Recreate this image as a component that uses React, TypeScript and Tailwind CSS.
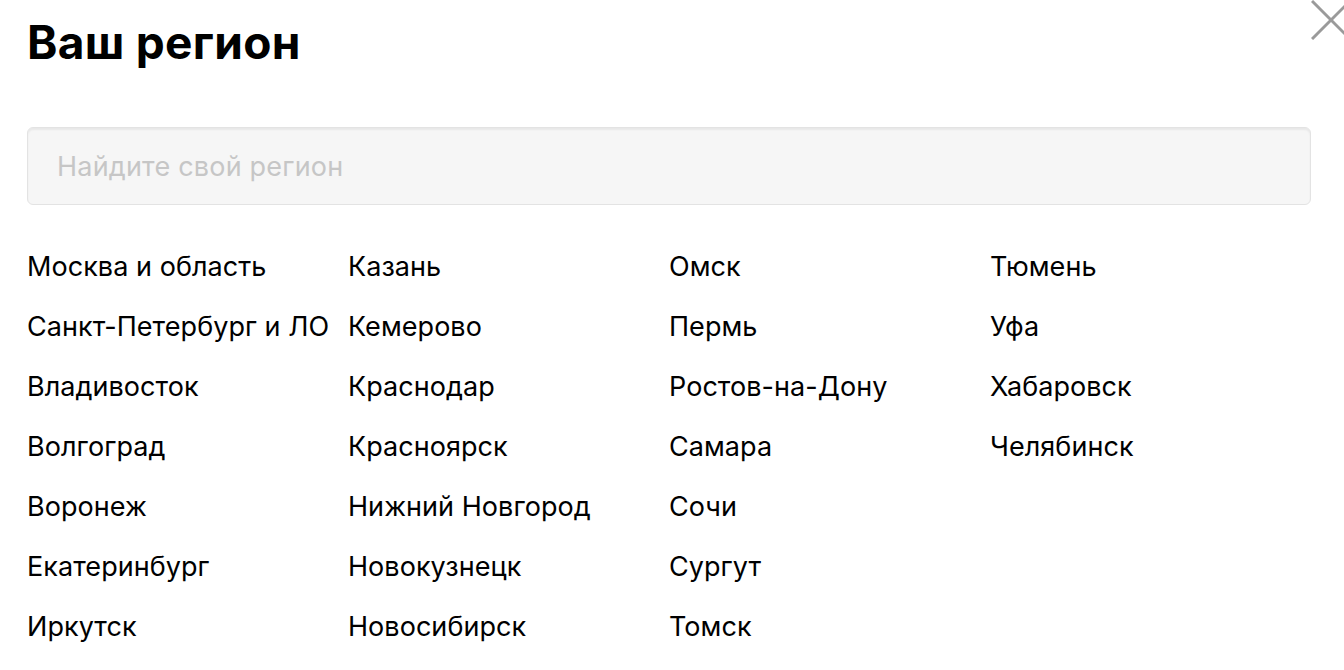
const columns = [
  ["Москва и область", "Санкт-Петербург и ЛО", "Владивосток", "Волгоград", "Воронеж", "Екатеринбург", "Иркутск"],
  ["Казань", "Кемерово", "Краснодар", "Красноярск", "Нижний Новгород", "Новокузнецк", "Новосибирск"],
  ["Омск", "Пермь", "Ростов-на-Дону", "Самара", "Сочи", "Сургут", "Томск"],
  ["Тюмень", "Уфа", "Хабаровск", "Челябинск"],
];

export default function App() {
  return (
    <div className="relative h-[670px] w-[1344px] overflow-hidden bg-white font-['Inter',sans-serif] text-black">
      <button className="absolute left-[1311px] top-0 text-[#9a9a9a]" aria-label="Закрыть">
        <svg width="40" height="40" viewBox="0 0 40 40" stroke="currentColor" strokeWidth="3">
          <line x1="1" y1="1" x2="39" y2="39" />
          <line x1="1" y1="39" x2="39" y2="1" />
        </svg>
      </button>

      <div className="pl-[27px] pr-[33px] pt-[14px]">
        <h1 className="text-[46px] font-bold leading-[56px] tracking-[0.3px]">Ваш регион</h1>

        <input
          placeholder="Найдите свой регион"
          className="mt-[57px] h-[78px] w-full rounded-md border border-[#e3e3e3] bg-[#f6f6f6] px-[29px] text-[27px] tracking-[0.2px] shadow-[inset_0_2px_2px_rgba(0,0,0,0.06)] outline-none placeholder:text-[#c6c6c6]"
        />

        <div className="mt-[32px] grid grid-cols-4">
          {columns.map((col, i) => (
            <ul key={i}>
              {col.map((name) => (
                <li key={name} className="whitespace-nowrap text-[27px] leading-[60px] tracking-[0.05px]">
                  {name}
                </li>
              ))}
            </ul>
          ))}
        </div>
      </div>
    </div>
  );
}
